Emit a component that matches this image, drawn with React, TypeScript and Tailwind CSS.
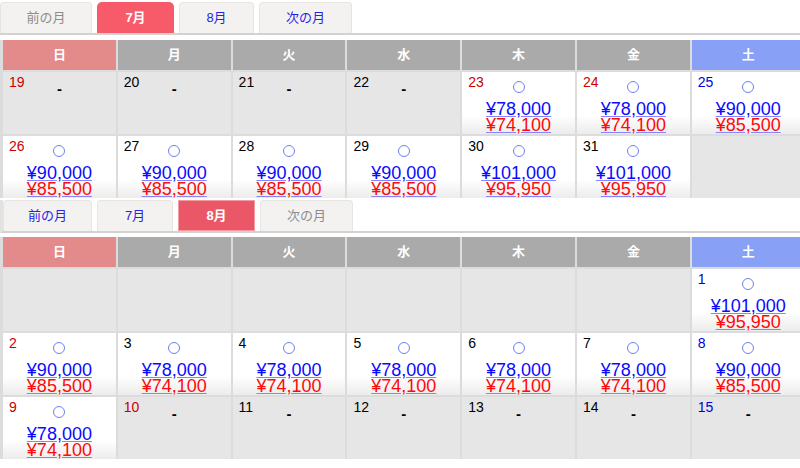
import React from 'react';

type Day = {
  d?: number;
  tone?: 'red' | 'blue' | 'black';
  price?: [string, string];
  dash?: boolean;
};

const WEEK = ['日', '月', '火', '水', '木', '金', '土'];

const P78: [string, string] = ['¥78,000', '¥74,100'];
const P90: [string, string] = ['¥90,000', '¥85,500'];
const P101: [string, string] = ['¥101,000', '¥95,950'];

const JULY: Day[] = [
  { d: 19, tone: 'red', dash: true },
  { d: 20, dash: true },
  { d: 21, dash: true },
  { d: 22, dash: true },
  { d: 23, tone: 'red', price: P78 },
  { d: 24, tone: 'red', price: P78 },
  { d: 25, tone: 'blue', price: P90 },
  { d: 26, tone: 'red', price: P90 },
  { d: 27, price: P90 },
  { d: 28, price: P90 },
  { d: 29, price: P90 },
  { d: 30, price: P101 },
  { d: 31, price: P101 },
  {},
];

const AUGUST: Day[] = [
  {}, {}, {}, {}, {}, {},
  { d: 1, tone: 'blue', price: P101 },
  { d: 2, tone: 'red', price: P90 },
  { d: 3, price: P78 },
  { d: 4, price: P78 },
  { d: 5, price: P78 },
  { d: 6, price: P78 },
  { d: 7, price: P78 },
  { d: 8, tone: 'blue', price: P90 },
  { d: 9, tone: 'red', price: P78 },
  { d: 10, tone: 'red', dash: true },
  { d: 11, dash: true },
  { d: 12, dash: true },
  { d: 13, dash: true },
  { d: 14, dash: true },
  { d: 15, tone: 'blue', dash: true },
];

const toneClass = {
  red: 'text-[#cc0000]',
  blue: 'text-[#0000dd]',
  black: 'text-black',
};

function Tab({ label, state, w }: { label: string; state: 'off' | 'link' | 'on' | 'on2'; w: string }) {
  if (state === 'on') {
    return (
      <div className={`flex h-[31px] ${w} items-center justify-center rounded-t-[5px] bg-[#f75a69] text-[13px] font-bold text-white`}>
        {label}
      </div>
    );
  }
  if (state === 'on2') {
    return (
      <div className={`flex h-[31px] ${w} items-center justify-center border border-[#f39aa3] bg-[#ea5868] text-[13px] font-bold text-white`}>
        {label}
      </div>
    );
  }
  return (
    <div
      className={`flex h-[31px] ${w} items-center justify-center rounded-t-[4px] border border-b-0 border-[#e6e5e2] bg-[#f3f2f0] text-[13px] ${
        state === 'off' ? 'text-[#8c8c8c]' : 'text-[#2424e6]'
      }`}
    >
      {label}
    </div>
  );
}

function Cell({ day }: { day: Day }) {
  const filled = !!day.price;
  return (
    <div
      className={
        filled
          ? 'h-[62px] bg-linear-to-b from-white from-70% to-[#ececec]'
          : 'h-[62px] bg-[#e6e6e6]'
      }
    >
      <div className="grid grid-cols-[1fr_auto_1fr] items-start">
        <span className={`mt-[2px] pl-[6px] text-[14px] leading-[16px] ${toneClass[day.tone ?? 'black']}`}>
          {day.d ?? ''}
        </span>
        {filled ? (
          <div className="mt-[9px] h-[12px] w-[12px] rounded-full border border-[#6f7ff2]" />
        ) : day.dash ? (
          <span className="mt-[9px] text-[15px] font-bold leading-[16px] text-black">-</span>
        ) : (
          <span />
        )}
        <span />
      </div>
      {day.price && (
        <div className="mt-[8px] flex flex-col items-center text-[18px] leading-[16px]">
          <span className="block h-[16px] text-[#0a0aff] underline decoration-[#8585ff]">{day.price[0]}</span>
          <span className="block h-[16px] text-[#ff0a0a] underline decoration-[#8585ff]">{day.price[1]}</span>
        </div>
      )}
    </div>
  );
}

function Calendar({ days }: { days: Day[] }) {
  return (
    <div className="grid grid-cols-[repeat(7,112.8px)] gap-[2px] bg-[#dcdcdc] pl-[3px]">
      {WEEK.map((w, i) => (
        <div
          key={w}
          className={`flex h-[30px] items-center justify-center text-[13px] font-bold text-white ${
            i === 0 ? 'bg-[#e38a8a]' : i === 6 ? 'bg-[#88a0f6]' : 'bg-[#aaaaaa]'
          }`}
        >
          {w}
        </div>
      ))}
      {days.map((d, i) => (
        <Cell key={i} day={d} />
      ))}
    </div>
  );
}

export default function App() {
  return (
    <div
      className="h-[468px] w-[800px] overflow-hidden bg-white"
      style={{ fontFamily: '"Liberation Sans", "Noto Sans CJK JP", sans-serif' }}
    >
      {/* July */}
      <div className="flex h-[35px] items-end gap-[5px] border-b-2 border-[#d2d2d2]">
        <Tab label="前の月" state="off" w="w-[92px]" />
        <Tab label="7月" state="on" w="w-[77px]" />
        <Tab label="8月" state="link" w="w-[75px]" />
        <Tab label="次の月" state="link" w="w-[93px]" />
      </div>
      <div className="mt-[5px]">
        <Calendar days={JULY} />
      </div>

      {/* August */}
      <div className="mt-[2px] flex h-[33px] items-end gap-[5px] border-b-2 border-l-[3px] border-[#d2d2d2] border-l-[#e2e2e2]">
        <Tab label="前の月" state="link" w="w-[89px]" />
        <Tab label="7月" state="link" w="w-[76px]" />
        <Tab label="8月" state="on2" w="w-[77px]" />
        <Tab label="次の月" state="off" w="w-[93px]" />
      </div>
      <div className="mt-[4px]">
        <Calendar days={AUGUST} />
      </div>
    </div>
  );
}
